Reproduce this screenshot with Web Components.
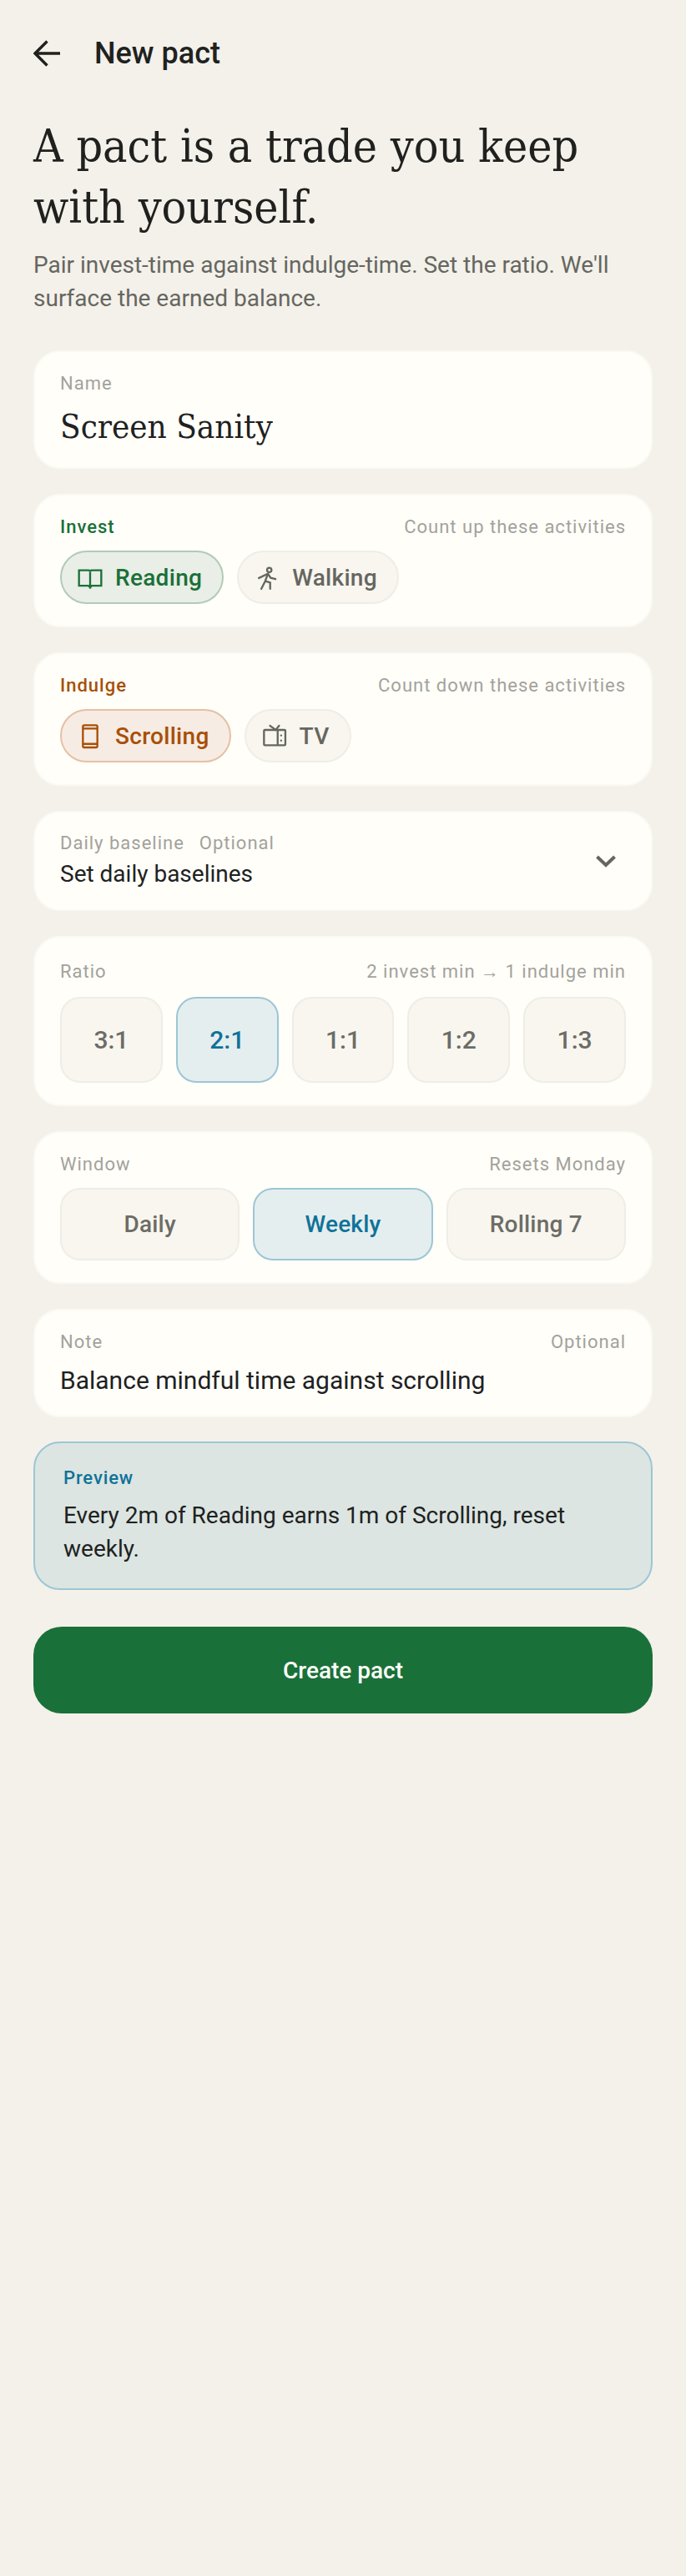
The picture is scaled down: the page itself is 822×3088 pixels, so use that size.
<!doctype html>
<html>
<head>
<meta charset="utf-8">
<title>New pact</title>
<style>
  html, body { margin: 0; background: #f3f1ea; }
  body { font-family: Roboto, "Noto Sans", sans-serif; color: #20211f; }
</style>
</head>
<body>
<pact-screen>
  <pact-header>New pact</pact-header>
  <pact-intro></pact-intro>

  <pact-card label="Name">
    <pact-value serif>Screen Sanity</pact-value>
  </pact-card>

  <pact-card label="Invest" hint="Count up these activities" tone="invest">
    <pact-chips>
      <pact-chip icon="book" tone="invest">Reading</pact-chip>
      <pact-chip icon="walk">Walking</pact-chip>
    </pact-chips>
  </pact-card>

  <pact-card label="Indulge" hint="Count down these activities" tone="indulge">
    <pact-chips>
      <pact-chip icon="phone" tone="indulge">Scrolling</pact-chip>
      <pact-chip icon="tv">TV</pact-chip>
    </pact-chips>
  </pact-card>

  <pact-baseline></pact-baseline>

  <pact-card label="Ratio" hint="2 invest min → 1 indulge min" roomy>
    <pact-options>
      <pact-option tall>3:1</pact-option>
      <pact-option tall selected>2:1</pact-option>
      <pact-option tall>1:1</pact-option>
      <pact-option tall>1:2</pact-option>
      <pact-option tall>1:3</pact-option>
    </pact-options>
  </pact-card>

  <pact-card label="Window" hint="Resets Monday">
    <pact-options>
      <pact-option>Daily</pact-option>
      <pact-option selected>Weekly</pact-option>
      <pact-option>Rolling 7</pact-option>
    </pact-options>
  </pact-card>

  <pact-card label="Note" hint="Optional">
    <pact-value>Balance mindful time against scrolling</pact-value>
  </pact-card>

  <pact-preview>Every 2m of Reading earns 1m of Scrolling, reset weekly.</pact-preview>
  <pact-button>Create pact</pact-button>
</pact-screen>

<script>
function define(name, css, html) {
  customElements.define(name, class extends HTMLElement {
    connectedCallback() {
      if (this.shadowRoot) return
      this.attachShadow({ mode: 'open' })
      this.shadowRoot.innerHTML = `<style>${css}</style>${typeof html === 'function' ? html(this) : html}`
    }
  })
}

const icons = {
  book: '<path d="M2 5.7h8.5c.8 0 1.5.7 1.5 1.5 0-.8.7-1.5 1.5-1.5H22v13.9h-8.5L12 21l-1.5-1.4H2z"/><path d="M12 7.2v15"/>',
  walk: '<circle cx="14" cy="5.5" r="2"/><path d="M4 13l8.75-4.2 2.45 3.7 5.1 1.2"/><path d="M12.75 8.8l-2.45 6.7L6.5 23"/><path d="M10.3 15.5l4.5 1.3V23"/>',
  phone: '<rect x="5.5" y="2.5" width="13" height="20" rx="1.3"/><path d="M5.5 5.5h13M5.5 19.3h13"/>',
  tv: '<rect x="2.5" y="6.75" width="19.2" height="13.75" rx=".8"/><path d="M14.8 6.75V20.5M7.3 2.5 13 6.75l3.5-4.25"/><circle cx="17.9" cy="11.7" r=".9" fill="currentColor" stroke="none"/><circle cx="17.9" cy="16.3" r=".9" fill="currentColor" stroke="none"/>',
  back: '<path d="M32 16H2.5M16.5 1.5 2 16l14.5 14.5"/>',
  chevron: '<path d="M1.5 2l10.5 10L22.5 2"/>'
}

define('pact-screen', `
  :host { display: flex; flex-direction: column; width: 822px; min-height: 3088px; box-sizing: border-box;
    padding: 0 40px; background: #f3f1ea; }
`, '<slot></slot>')

define('pact-header', `
  :host { display: flex; align-items: center; gap: 41px; height: 128px; font-size: 36px; font-weight: 500; color: #20211f; }
  svg { width: 32px; height: 32px; fill: none; stroke: currentColor; stroke-width: 3.4; flex: none; }
`, `<svg viewBox="0 0 32 32">${icons.back}</svg><span><slot></slot></span>`)

define('pact-intro', `
  :host { display: block; margin: 11px 0 42px; }
  h1 { margin: 0; font: 400 55px/73px "DejaVu Serif Condensed","Liberation Serif",serif; color: #20211f; }
  p { margin: 13px 0 0; font-size: 28px; line-height: 40px; color: #666660; }
`, `<h1>A pact is a trade you keep with yourself.</h1>
    <p>Pair invest-time against indulge-time. Set the ratio. We'll surface the earned balance.</p>`)

define('pact-card', `
  :host { display: block; box-sizing: border-box; margin: 0 0 30px; padding: 24px 30px 26px;
    background: #fffef9; border: 2px solid #faf9f3; border-radius: 32px; }
  .top { display: flex; justify-content: space-between; font-size: 22px; line-height: 28px; letter-spacing: 1px; color: #a3a29c; }
  :host([roomy]) .top { line-height: 33px; }
  :host([tone=invest]) .label { color: #1a7039; font-weight: 500; }
  :host([tone=indulge]) .label { color: #a84f06; font-weight: 500; }
`, el => `<div class="top"><span class="label">${el.getAttribute('label')}</span><span>${el.getAttribute('hint') || ''}</span></div><slot></slot>`)

define('pact-value', `
  :host { display: block; margin-top: 15px; font-size: 30px; line-height: 33px; color: #20211f; }
  :host([serif]) { margin: 13px 0 -1px; font: 400 40px/48px "DejaVu Serif Condensed","Liberation Serif",serif; }
`, '<slot></slot>')

define('pact-chips', `
  :host { display: flex; gap: 16px; margin-top: 14px; }
`, '<slot></slot>')

define('pact-chip', `
  :host { display: flex; align-items: center; gap: 14px; box-sizing: border-box; height: 64px; padding: 0 24px 0 18px;
    font-size: 28px; font-weight: 500; letter-spacing: .3px; color: #666660; background: #f8f6ef; border: 2px solid #f0ede6; border-radius: 32px; }
  :host([tone=invest]) { color: #1a7039; background: #e9eee6; border-color: #b0cbb6; }
  :host([tone=indulge]) { color: #a84f06; background: #f6ece4; border-color: #e6c0a4; }
  svg { width: 32px; height: 32px; fill: none; stroke: currentColor; stroke-width: 1.75; flex: none; }
`, el => `<svg viewBox="0 0 24 24">${icons[el.getAttribute('icon')]}</svg><span><slot></slot></span>`)

define('pact-baseline', `
  :host { display: flex; align-items: center; justify-content: space-between; box-sizing: border-box; height: 120px; margin: 0 0 30px;
    padding: 0 42px 0 30px; background: #fffef9; border: 2px solid #faf9f3; border-radius: 32px; }
  .top { display: flex; gap: 18px; font-size: 22px; line-height: 28px; letter-spacing: 1px; color: #a3a29c; }
  .main { margin-top: 3px; font-size: 28px; line-height: 40px; color: #20211f; }
  svg { width: 24px; height: 15px; fill: none; stroke: #666660; stroke-width: 4; flex: none; }
`, `<div><div class="top"><span>Daily baseline</span><span>Optional</span></div><div class="main">Set daily baselines</div></div>
    <svg viewBox="0 0 24 15">${icons.chevron}</svg>`)

define('pact-options', `
  :host { display: flex; gap: 16px; margin-top: 14px; }
`, '<slot></slot>')

define('pact-option', `
  :host { flex: 1 1 0; display: flex; align-items: center; justify-content: center; box-sizing: border-box; height: 87px;
    font-size: 28px; font-weight: 500; letter-spacing: .2px; color: #6c6c66; background: #f8f6ef; border: 2px solid #f0ede6; border-radius: 24px; }
  :host([tall]) { height: 103px; font-size: 30px; letter-spacing: 0; }
  :host([selected]) { color: #0f7299; background: #e5eeee; border-color: #9cc6d5; }
`, '<slot></slot>')

define('pact-preview', `
  :host { display: block; box-sizing: border-box; height: 178px; padding: 28px 34px 27px; margin: -1px 0 44px; background: #dce5e1;
    border: 2px solid #9cc6d5; border-radius: 32px; }
  .label { font-size: 22px; font-weight: 500; line-height: 28px; letter-spacing: .88px; color: #0f7299; }
  .text { margin-top: 11px; font-size: 28px; line-height: 40px; color: #20211f; }
`, '<div class="label">Preview</div><div class="text"><slot></slot></div>')

define('pact-button', `
  :host { display: flex; align-items: center; justify-content: center; height: 104px; border-radius: 34px; background: #1a7039;
    color: #fffef9; font-size: 28px; font-weight: 500; }
`, '<slot></slot>')
</script>
</body>
</html>
